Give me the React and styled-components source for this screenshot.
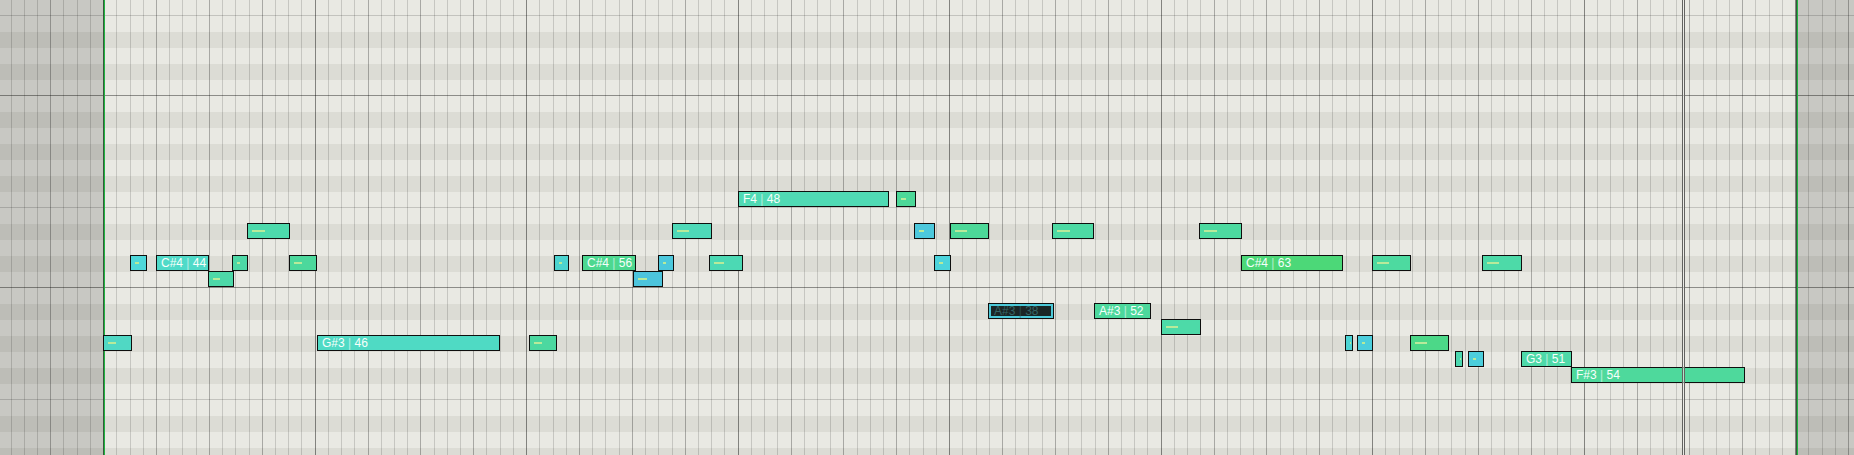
import React from 'react';
import styled, { createGlobalStyle } from 'styled-components';

const ROWS = 29;
const ROW_H = 16;
const STEP = 13.227;
const FIRST_STEP = -7;
const STEPS = 140;
const BLACK = [1, 3, 6, 8, 10];

// [row, left, right, color, label]
const NOTES = [
  [12, 738, 889, '#50dab4', 'F4 | 48'],
  [12, 896, 916, '#4cd898'],
  [14, 247, 290, '#4ddaac'],
  [14, 672, 712, '#4ed9b8'],
  [14, 914, 935, '#4cc8dc'],
  [14, 950, 989, '#4cd898'],
  [14, 1052, 1094, '#4ddaa4'],
  [14, 1199, 1242, '#4ddaa0'],
  [16, 130, 147, '#4ed8da'],
  [16, 156, 209, '#4fdac8', 'C#4 | 44'],
  [16, 232, 248, '#4dd8a6'],
  [16, 289, 317, '#4cd89c'],
  [16, 554, 569, '#4cd4d0'],
  [16, 582, 636, '#4cd890', 'C#4 | 56'],
  [16, 658, 674, '#4cc8dc'],
  [16, 709, 743, '#4cd9b4'],
  [16, 934, 951, '#4cd4dc'],
  [16, 1241, 1343, '#4cd878', 'C#4 | 63'],
  [16, 1372, 1411, '#4ddaa0'],
  [16, 1482, 1522, '#4ddaa8'],
  [17, 208, 234, '#4dd8a8'],
  [17, 633, 663, '#4cc4dc'],
  [19, 1094, 1151, '#4cd89c', 'A#3 | 52'],
  [20, 1161, 1201, '#4ddaa8'],
  [21, 103, 132, '#50d8c4'],
  [21, 317, 500, '#4fdac4', 'G#3 | 46'],
  [21, 529, 557, '#4cd8a0'],
  [21, 1345, 1353, '#4cd4d4'],
  [21, 1357, 1373, '#4ccedc'],
  [21, 1410, 1449, '#4cd888'],
  [22, 1455, 1463, '#4cd8b0'],
  [22, 1468, 1484, '#4ccedc'],
  [22, 1521, 1572, '#4ed9a8', 'G3 | 51'],
  [23, 1571, 1745, '#4ed99c', 'F#3 | 54'],
];

const GlobalStyle = createGlobalStyle`
  html, body {
    margin: 0;
    padding: 0;
    background: #e9e9e3;
    overflow: hidden;
  }
`;

// every layer sits in the same grid cell; the columns split off the loop gutters
const Roll = styled.div`
  display: grid;
  grid-template-columns: 103px 2px 1fr 2px 56px;
  grid-template-rows: 455px;
  width: 1854px;
  height: 455px;
  overflow: hidden;
  font-family: "Liberation Sans", Arial, sans-serif;
`;

const Layer = styled.div`
  grid-row: 1;
  grid-column: 1 / -1;
  min-width: 0;
  overflow: hidden;
`;

const Lanes = styled(Layer)`
  display: flex;
  flex-direction: column;
`;

const Lane = styled.div`
  flex: none;
  height: ${ROW_H}px;
  box-sizing: border-box;
  background: ${p => (p.$black ? '#dcdcd5' : '#e9e9e3')};
  border-bottom: ${p => (p.$line ? `1px solid ${p.$line}` : 'none')};
`;

const Columns = styled(Layer)`
  display: flex;
  padding-left: 10.61px;
`;

const Step = styled.div`
  flex: 0 0 ${STEP}px;
  box-sizing: border-box;
  border-left: 1px solid
    ${p => (p.$kind === 'bar' ? 'rgba(0,0,0,0.44)' : p.$kind === 'beat' ? 'rgba(0,0,0,0.28)' : 'rgba(0,0,0,0.15)')};
`;

const Dim = styled.div`
  grid-row: 1;
  grid-column: ${p => (p.$side === 'left' ? 1 : 5)};
  background: rgba(0, 0, 0, 0.14);
`;

const LoopEdge = styled.div`
  grid-row: 1;
  grid-column: ${p => (p.$side === 'left' ? 2 : 4)};
  background: linear-gradient(to right, #35593a 50%, #1fb440 50%);
`;

const Canvas = styled(Layer)`
  position: relative;
`;

const Playhead = styled.div`
  position: absolute;
  top: 0;
  bottom: 0;
  left: 1682px;
  width: 3px;
  box-sizing: border-box;
  border-left: 1px solid #626260;
  border-right: 1px solid #626260;
  background: rgba(240, 240, 235, 0.6);
`;

const Note = styled.div`
  position: absolute;
  height: 16px;
  box-sizing: border-box;
  border: 1px solid #0e0f0e;
  background: ${p => p.$color};
  overflow: hidden;
  white-space: nowrap;
`;

const Selected = styled(Note)`
  background: #1a2626;
  box-shadow: inset 0 0 0 2px #4cc9d8;
`;

const Label = styled.span`
  display: block;
  font-size: 12px;
  line-height: 14px;
  color: ${p => (p.$dim ? '#356565' : '#f6fffb')};
  padding-left: ${p => (p.$dim ? 5 : 4)}px;
`;

const Pipe = styled.span`
  opacity: 0.6;
`;

const Dash = styled.div`
  margin: 6px 0 0 4px;
  height: 2px;
  background: #b8ea9a;
`;

const noteBox = (row, x1, x2) => ({
  left: x1,
  top: row * ROW_H - 1,
  width: x2 - x1,
});

const NoteLabel = ({ text, dim }) => {
  const [name, vel] = text.split(' | ');
  return (
    <Label $dim={dim}>
      {name} <Pipe>|</Pipe> {vel}
    </Label>
  );
};

const PianoNote = ({ row, x1, x2, color, label }) => {
  const w = x2 - x1;
  return (
    <Note $color={color} style={noteBox(row, x1, x2)}>
      {label ? (
        <NoteLabel text={label} />
      ) : (
        <Dash style={{ width: Math.max(1, Math.round(w * 0.37 - 2.5)) }} />
      )}
    </Note>
  );
};

const laneInfo = r => {
  const s = (((5 - r) % 12) + 12) % 12;
  let line = null;
  if (s === 5) line = 'rgba(0,0,0,0.16)';
  if (s === 0) line = 'rgba(0,0,0,0.4)';
  return { black: BLACK.includes(s), line };
};

const stepKind = j => {
  const m = ((j % 16) + 16) % 16;
  if (m === 0) return 'bar';
  return m % 4 === 0 ? 'beat' : 'sub';
};

export default function App() {
  return (
    <>
      <GlobalStyle />
      <Roll>
        <Lanes>
          {Array.from({ length: ROWS }, (_, r) => {
            const { black, line } = laneInfo(r);
            return <Lane key={r} $black={black} $line={line} />;
          })}
        </Lanes>

        <Columns>
          {Array.from({ length: STEPS }, (_, k) => (
            <Step key={k} $kind={stepKind(k + FIRST_STEP)} />
          ))}
        </Columns>

        <Dim $side="left" />
        <LoopEdge $side="left" />
        <LoopEdge $side="right" />
        <Dim $side="right" />

        <Canvas>
          {NOTES.map(([row, x1, x2, color, label], i) => (
            <PianoNote key={i} row={row} x1={x1} x2={x2} color={color} label={label} />
          ))}

          <Selected style={noteBox(19, 988, 1054)}>
            <NoteLabel text="A#3 | 38" dim />
          </Selected>

          <Playhead />
        </Canvas>
      </Roll>
    </>
  );
}
